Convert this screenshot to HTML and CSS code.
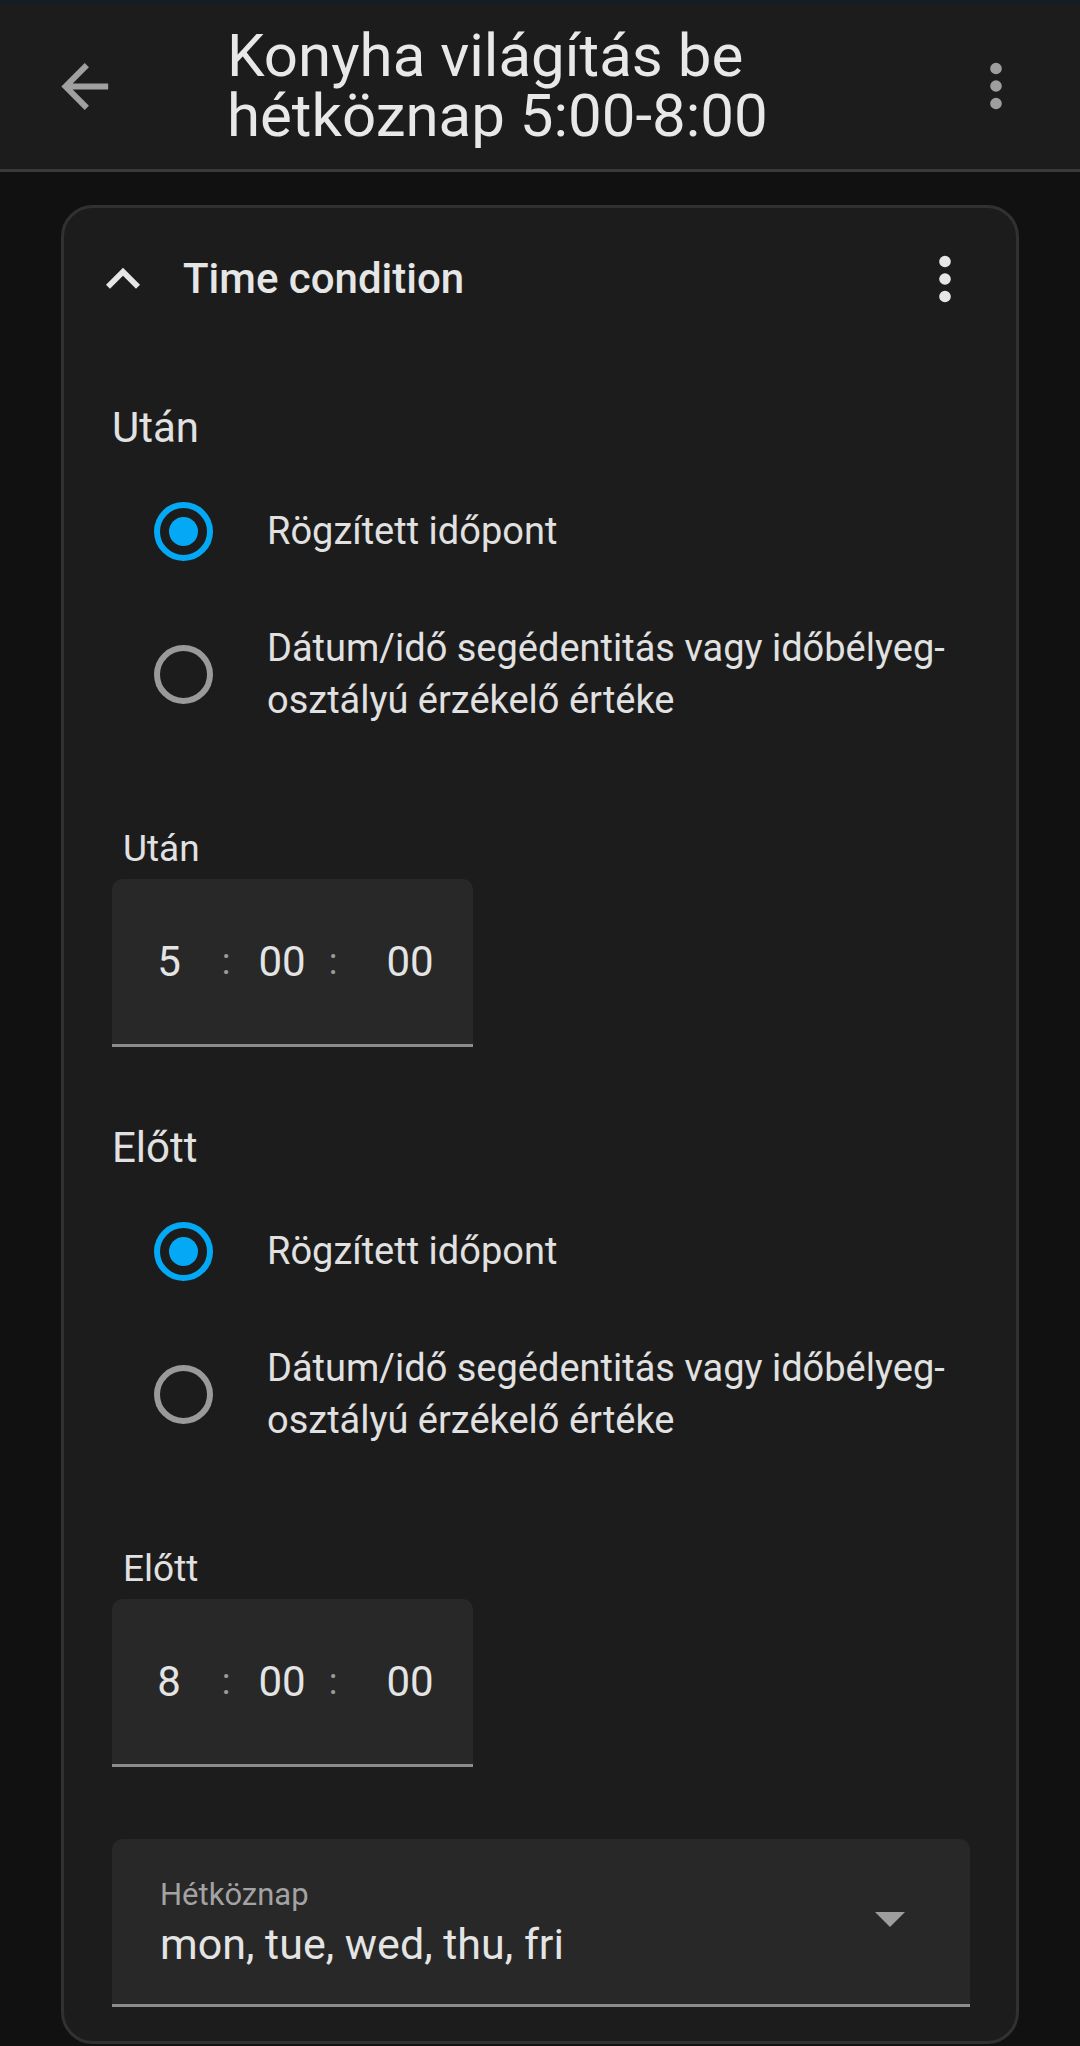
FILE: index.html
```html
<!DOCTYPE html>
<html lang="hu">
<head>
<meta charset="utf-8">
<title>Konyha világítás be hétköznap 5:00-8:00</title>
<link rel="stylesheet" href="styles.css">
</head>
<body>
<div class="statusbar"></div>
<header class="topbar">
  <svg class="back" viewBox="0 0 24 24"><path d="M20,11V13H8L13.5,18.5L12.08,19.92L4.16,12L12.08,4.08L13.5,5.5L8,11H20Z"/></svg>
  <h1 class="title"><span class="tl">Konyha világítás be</span><span class="tl">hétköznap 5:00-8:00</span></h1>
  <svg class="menu" viewBox="0 0 24 24"><path d="M12,16A2,2 0 0,1 14,18A2,2 0 0,1 12,20A2,2 0 0,1 10,18A2,2 0 0,1 12,16M12,10A2,2 0 0,1 14,12A2,2 0 0,1 12,14A2,2 0 0,1 10,12A2,2 0 0,1 12,10M12,4A2,2 0 0,1 14,6A2,2 0 0,1 12,8A2,2 0 0,1 10,6A2,2 0 0,1 12,4Z"/></svg>
</header>
<main class="page">
  <section class="card">
    <div class="card-head">
      <svg class="chev" viewBox="0 0 24 24"><path d="M7.41,15.41L12,10.83L16.59,15.41L18,14L12,8L6,14L7.41,15.41Z"/></svg>
      <span class="card-title">Time condition</span>
      <svg class="card-menu" viewBox="0 0 24 24"><path d="M12,16A2,2 0 0,1 14,18A2,2 0 0,1 12,20A2,2 0 0,1 10,18A2,2 0 0,1 12,16M12,10A2,2 0 0,1 14,12A2,2 0 0,1 12,14A2,2 0 0,1 10,12A2,2 0 0,1 12,10M12,4A2,2 0 0,1 14,6A2,2 0 0,1 12,8A2,2 0 0,1 10,6A2,2 0 0,1 12,4Z"/></svg>
    </div>
    <div class="card-body">
      <div class="section">
        <div class="sec-label">Után</div>
        <div class="radio-row">
          <span class="radio checked"></span>
          <span class="radio-label">Rögzített időpont</span>
        </div>
        <div class="radio-row second">
          <span class="radio"></span>
          <span class="radio-label">Dátum/idő segédentitás vagy időbélyeg-osztályú érzékelő értéke</span>
        </div>
        <div class="field-label">Után</div>
        <div class="time-box">
          <span class="t-h">5</span><span class="t-c1">:</span><span class="t-m">00</span><span class="t-c2">:</span><span class="t-s">00</span>
        </div>
      </div>
      <div class="section">
        <div class="sec-label">Előtt</div>
        <div class="radio-row">
          <span class="radio checked"></span>
          <span class="radio-label">Rögzített időpont</span>
        </div>
        <div class="radio-row second">
          <span class="radio"></span>
          <span class="radio-label">Dátum/idő segédentitás vagy időbélyeg-osztályú érzékelő értéke</span>
        </div>
        <div class="field-label">Előtt</div>
        <div class="time-box">
          <span class="t-h">8</span><span class="t-c1">:</span><span class="t-m">00</span><span class="t-c2">:</span><span class="t-s">00</span>
        </div>
      </div>
      <div class="select">
        <div class="select-text">
          <div class="select-label">Hétköznap</div>
          <div class="select-value">mon, tue, wed, thu, fri</div>
        </div>
        <svg class="select-arrow" viewBox="0 0 24 24"><path d="M7,10L12,15L17,10H7Z"/></svg>
      </div>
    </div>
  </section>
</main>
</body>
</html>
```
FILE: styles.css
```css
html, body {
  margin: 0;
  padding: 0;
}
body {
  width: 1080px;
  height: 2046px;
  overflow: hidden;
  background: #111111;
  color: #e1e1e1;
  font-family: Roboto, "Noto Sans", "Liberation Sans", sans-serif;
}
.statusbar {
  height: 3px;
  background: #121c24;
}
.topbar {
  height: 166px;
  background: #1c1c1c;
  border-bottom: 3px solid #3a3a3a;
  display: flex;
  align-items: center;
}
.back {
  width: 71px;
  height: 71px;
  margin-left: 49px;
  fill: #a0a0a0;
  flex: none;
}
.title {
  margin: 0 0 0 107px;
  font-size: 60px;
  line-height: 60px;
  font-weight: 400;
  color: #e8e8e8;
  flex: 1;
  display: flex;
  flex-direction: column;
}
.tl {
  display: block;
  height: 60px;
  line-height: 60px;
}
.menu {
  width: 70px;
  height: 70px;
  margin-right: 49px;
  fill: #9e9e9e;
  flex: none;
}
.page {
  padding: 33px 61px 0 61px;
}
.card {
  background: #1c1c1c;
  border: 3px solid #313131;
  border-radius: 32px;
  height: 1839px;
  box-sizing: border-box;
  overflow: hidden;
}
.card-head {
  height: 140px;
  display: flex;
  align-items: center;
  padding: 0 36px 0 25px;
}
.chev {
  width: 68px;
  height: 68px;
  fill: #e6e6e6;
  flex: none;
  margin-top: 1px;
}
.card-title {
  margin-left: 26px;
  font-size: 42px;
  font-weight: 500;
  color: #e6e6e6;
  flex: 1;
}
.card-menu {
  width: 70px;
  height: 70px;
  fill: #e6e6e6;
  flex: none;
  margin-top: 2px;
}
.card-body {
  padding: 0 46px 0 48px;
}
.section {
  padding-top: 55px;
  padding-bottom: 21px;
}
.sec-label {
  font-size: 42px;
  line-height: 50px;
  color: #e1e1e1;
}
.radio-row {
  min-height: 126px;
  display: flex;
  align-items: center;
  padding-left: 42px;
  margin-top: 15px;
}
.radio-row.second {
  margin-top: 17px;
}
.radio {
  width: 59px;
  height: 59px;
  box-sizing: border-box;
  border: 6px solid #9a9a9a;
  border-radius: 50%;
  flex: none;
  display: flex;
  align-items: center;
  justify-content: center;
}
.radio.checked {
  border-color: #03a9f4;
}
.radio.checked::after {
  content: "";
  width: 29px;
  height: 29px;
  border-radius: 50%;
  background: #03a9f4;
}
.radio-label {
  margin-left: 54px;
  font-size: 38px;
  line-height: 52px;
  color: #e1e1e1;
  max-width: 704px;
}
.field-label {
  margin-top: 90px;
  padding-left: 11px;
  font-size: 37px;
  line-height: 44px;
  color: #e1e1e1;
}
.time-box {
  margin-top: 8px;
  width: 361px;
  height: 168px;
  box-sizing: border-box;
  background: #282828;
  border-radius: 10px 10px 0 0;
  border-bottom: 3px solid #8c8c8c;
  display: flex;
  align-items: center;
  padding-left: 27px;
  font-size: 42px;
  line-height: 50px;
  color: #e4e4e4;
}
.time-box span {
  text-align: center;
  display: block;
}
.t-h { width: 60px; }
.t-c1 { width: 54px; color: #9a9a9a; font-size: 36px; }
.t-m { width: 58px; }
.t-c2 { width: 44px; color: #9a9a9a; font-size: 36px; }
.t-s { width: 110px; }
.select {
  margin-top: 51px;
  height: 168px;
  box-sizing: border-box;
  background: #282828;
  border-radius: 10px 10px 0 0;
  border-bottom: 3px solid #8c8c8c;
  display: flex;
  align-items: center;
  padding: 0 44px 0 48px;
}
.select-text {
  flex: 1;
  margin-top: 2px;
}
.select-label {
  font-size: 31px;
  line-height: 37px;
  color: #a3a3a3;
}
.select-value {
  margin-top: 6px;
  font-size: 43px;
  line-height: 50px;
  color: #e4e4e4;
}
.select-arrow {
  width: 72px;
  height: 72px;
  fill: #9e9e9e;
  flex: none;
  margin-top: -8px;
}
```
